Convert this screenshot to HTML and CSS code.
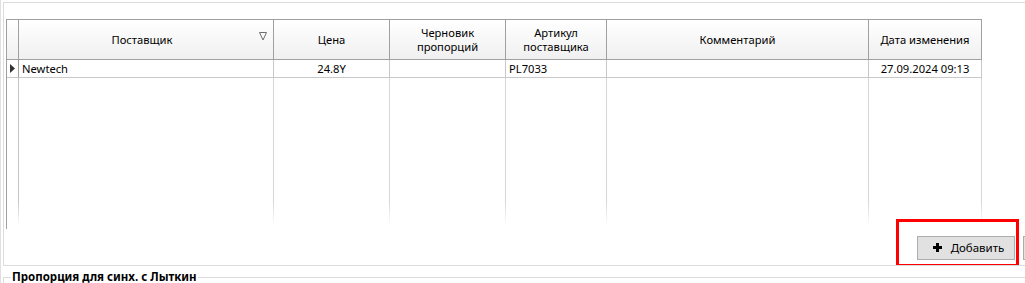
FILE: index.html
```html
<!DOCTYPE html>
<html lang="ru">
<head>
    <meta charset="UTF-8">
    <title>Поставщики</title>
    <link rel="stylesheet" href="styles.css">
</head>
<body>
    <div class="window">
        <div class="panel">
            <div class="grid">
                <div class="grid-head">
                    <div class="cell rowhdr"></div>
                    <div class="cell">
                        <span class="head-text">Поставщик</span>
                        <svg class="filter" width="8" height="9" viewBox="0 0 8 9"><path d="M0.5 0.5 H7.5 L4 8 Z" fill="none" stroke="#6e6e6e" stroke-width="1"/></svg>
                    </div>
                    <div class="cell">Цена</div>
                    <div class="cell">Черновик<br>пропорций</div>
                    <div class="cell">Артикул<br>поставщика</div>
                    <div class="cell">Комментарий</div>
                    <div class="cell">Дата изменения</div>
                </div>
                <div class="grid-row">
                    <div class="cell rowhdr">
                        <svg width="5" height="9" viewBox="0 0 5 9"><path d="M0 0 L5 4.5 L0 9 Z" fill="#333"/></svg>
                    </div>
                    <div class="cell left">Newtech</div>
                    <div class="cell">24.8Y</div>
                    <div class="cell"></div>
                    <div class="cell left">PL7033</div>
                    <div class="cell"></div>
                    <div class="cell">27.09.2024 09:13</div>
                </div>
                <div class="grid-fill">
                    <div class="cell rowhdr"></div>
                    <div class="cell"></div>
                    <div class="cell"></div>
                    <div class="cell"></div>
                    <div class="cell"></div>
                    <div class="cell"></div>
                    <div class="cell"></div>
                </div>
            </div>
            <div class="toolbar">
                <div class="marked">
                    <button class="btn">
                        <svg width="9" height="9" viewBox="0 0 9 9"><path d="M3 0 H6 V3 H9 V6 H6 V9 H3 V6 H0 V3 H3 Z" fill="#000"/></svg>
                        Добавить
                    </button>
                </div>
                <button class="btn"></button>
            </div>
        </div>
        <fieldset class="group">
            <legend>Пропорция для синх. с Лыткин</legend>
        </fieldset>
    </div>
</body>
</html>
```

FILE: styles.css
```css
html, body {
    margin: 0;
    background: #fff;
}
body {
    font-family: 'Noto Sans', sans-serif;
    font-size: 11.2px;
    color: #000;
    width: 1025px;
    height: 283px;
    overflow: hidden;
}
.window {
    height: 283px;
    overflow: hidden;
    box-sizing: border-box;
    border-left: 1px solid #e0e0e0;
    padding-left: 2px;
}
.panel {
    margin-top: 2px;
    height: 262px;
    overflow: hidden;
    border-top: 1px solid #dcdcdc;
    border-left: 1px solid #dcdcdc;
    border-bottom: 1px solid #dcdcdc;
}
.grid {
    margin: 16px 0 0 2px;
    height: 209px;
    width: 975px;
    border-top: 1px solid #a0a0a0;
    border-left: 1px solid #a0a0a0;
    display: flex;
    flex-direction: column;
}
.grid-head, .grid-row, .grid-fill {
    display: grid;
    grid-template-columns: 12px 255px 116px 116px 101px 262px 113px;
}
.cell {
    box-sizing: border-box;
    display: flex;
    align-items: center;
    justify-content: center;
    text-align: center;
}
.grid-head .cell {
    height: 40px;
    line-height: 14px;
    border-right: 1px solid #a0a0a0;
    border-bottom: 1px solid #a0a0a0;
    background: linear-gradient(#ffffff, #f0f0f0);
    position: relative;
}
.head-text {
    margin-right: 8px;
}
.filter {
    position: absolute;
    right: 6px;
    top: 12px;
}
.grid-row .cell {
    height: 18px;
    border-right: 1px solid #c8c8c8;
    border-bottom: 1px solid #c8c8c8;
}
.grid-row .cell.left {
    justify-content: flex-start;
    padding-left: 3px;
}
.grid-row .rowhdr {
    justify-content: flex-start;
    padding-left: 3px;
    border-right-color: #a0a0a0;
}
.grid-fill {
    flex: 1;
    -webkit-mask-image: linear-gradient(#000 calc(100% - 28px), transparent calc(100% - 4px));
    mask-image: linear-gradient(#000 calc(100% - 28px), transparent calc(100% - 4px));
}
.grid-fill .cell {
    border-right: 1px solid #d6d6d6;
}
.grid-fill .rowhdr {
    border-right-color: #c4c4c4;
}
.toolbar {
    display: flex;
    gap: 8px;
    margin-top: 7px;
    padding-left: 913px;
}
.marked {
    position: relative;
}
.marked::after {
    content: "";
    position: absolute;
    left: -21px;
    top: -17px;
    width: 117px;
    height: 42px;
    border: 3px solid #ff0000;
}
.btn {
    flex: none;
    width: 98px;
    height: 24px;
    box-sizing: border-box;
    border: 1px solid #adadad;
    background: #e1e1e1;
    font-family: 'Noto Sans', sans-serif;
    font-size: 11.5px;
    color: #000;
    display: flex;
    align-items: center;
    justify-content: center;
    gap: 9px;
    padding: 0 0 1px 5px;
}
.group {
    margin: 4px 0 0 0;
    padding: 0 0 0 7px;
    border: none;
    border-top: 1px solid #dcdcdc;
    border-left: 1px solid #dcdcdc;
}
.group legend {
    font-weight: bold;
    font-size: 11.5px;
    padding: 0 1px;
    line-height: 14px;
}
```
